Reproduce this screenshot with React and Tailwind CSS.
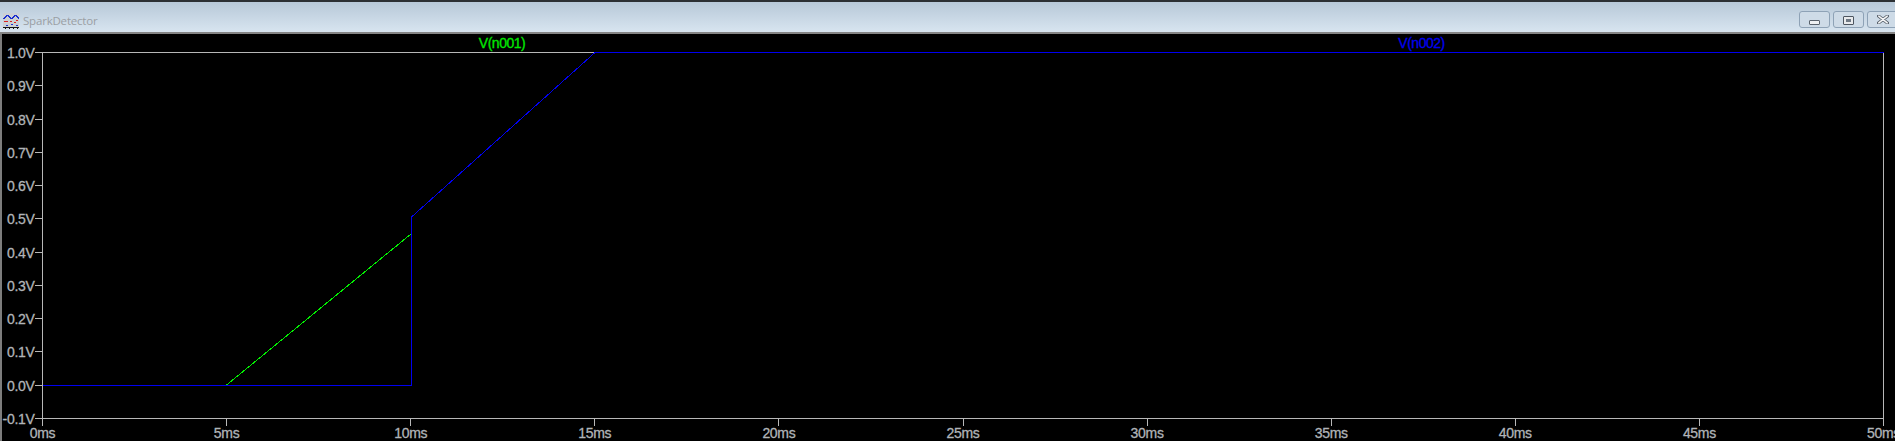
import React from 'react';

const yTicks = ['1.0V', '0.9V', '0.8V', '0.7V', '0.6V', '0.5V', '0.4V', '0.3V', '0.2V', '0.1V', '0.0V', '-0.1V'];
const xTicks = Array.from({ length: 11 }, (_, i) => i * 5);

const LEFT = 42.5;
const RIGHT = 1883.5;
const TOP = 18.5;
const BOTTOM = 384.5;

const xPos = (i) => LEFT + (i * (RIGHT - LEFT)) / 10;
const yPos = (i) => Math.floor(TOP + (i * (BOTTOM - TOP)) / 11) + 0.5;

const AppIcon = () => (
  <svg width="16" height="16" viewBox="0 0 16 16" className="shrink-0" shapeRendering="crispEdges">
    <rect x="0" y="0" width="16" height="14" fill="#ccd0d4" />
    <path d="M0 5 H1 V4 H2 V3 H3 V2 H5 V3 H6 V4 H7 V5 H9 V4 H10 V3 H11 V2 H13 V3 H14 V4 H15 V5 H16" fill="none" stroke="#1a2fd0" />
    <path d="M1 8.5 H5 M7 8.5 H9 M11 9.5 H13 M13 7.5 H15" fill="none" stroke="#d92222" />
    <path d="M3 12.5 H5 M8 11.5 H10 M13 12.5 H15" fill="none" stroke="#1a2fd0" />
    <path d="M0 14.5 H16" fill="none" stroke="#151515" />
    <path d="M2.5 15 V16 M6.5 15 V16 M10.5 15 V16 M14.5 15 V16" fill="none" stroke="#151515" />
  </svg>
);

const CloseGlyph = () => (
  <svg width="12" height="9" viewBox="0 0 12 9">
    <path d="M1.5 1 L10.5 8 M10.5 1 L1.5 8" stroke="#59626c" strokeWidth="3.2" strokeLinecap="round" />
    <path d="M1.8 1.2 L10.2 7.8 M10.2 1.2 L1.8 7.8" stroke="#f4f5f6" strokeWidth="1.6" strokeLinecap="round" />
  </svg>
);

const WinButton = ({ children, className }) => (
  <div className={`h-[17px] flex items-center justify-center border border-[#8ea2b6] rounded-[3px] bg-[#cedbe7] ${className}`}>
    {children}
  </div>
);

export default function App() {
  return (
    <div className="w-[1895px] h-[441px] flex flex-col overflow-hidden bg-black font-['Liberation_Sans',Arial,sans-serif]">
      {/* title bar */}
      <div className="h-[34px] shrink-0 flex items-start justify-between border-t-2 border-t-[#2b2f33] border-b-2 border-b-[#858585] bg-gradient-to-b from-[#b7c8d8] to-[#d8e5f0]">
        <div className="flex items-center gap-[4px] pl-[3px] pt-[11px]">
          <AppIcon />
          <span className="text-[11.5px] leading-[16px] tracking-[-0.2px] text-[#9b9fa4] font-['Open_Sans','Liberation_Sans',sans-serif]">SparkDetector</span>
        </div>
        <div className="flex items-center gap-[3px] -mr-[3px] pt-[9px]">
          <WinButton className="w-[31px]">
            <div className="w-[11px] h-[5px] mt-[5px] bg-[#eef0f2] border border-[#59626c] rounded-[1px]" />
          </WinButton>
          <WinButton className="w-[31px]">
            <div className="w-[11px] h-[9px] mt-[1px] bg-[#e8eaec] border border-[#4d5560] rounded-[1px] flex items-center justify-center">
              <div className="w-[5px] h-[3px] bg-[#6f7985]" />
            </div>
          </WinButton>
          <WinButton className="w-[31px] pr-[0px]">
            <CloseGlyph />
          </WinButton>
        </div>
      </div>

      {/* plot */}
      <div className="flex-1 min-h-0 border-l-2 border-l-[#7d7d7d]">
        <svg width="1893" height="407" viewBox="2 0 1893 407" className="block">
          <rect x={LEFT} y={TOP} width={RIGHT - LEFT} height={BOTTOM - TOP} fill="none" stroke="#b8b8b8" shapeRendering="crispEdges" />
          {yTicks.map((label, i) => (
            <g key={label}>
              <path d={`M35 ${yPos(i)} H${LEFT}`} stroke="#b8b8b8" shapeRendering="crispEdges" />
              <text x="34.5" y={yPos(i) + 5} textAnchor="end" className="fill-[#b0b4b8] stroke-[#b0b4b8] stroke-[0.3px] text-[14px] tracking-[-0.3px]">{label}</text>
            </g>
          ))}
          {xTicks.map((ms, i) => (
            <g key={ms}>
              <path d={`M${Math.floor(xPos(i)) + 0.5} ${BOTTOM} V${BOTTOM + 7}`} stroke="#b8b8b8" shapeRendering="crispEdges" />
              <text x={xPos(i)} y={BOTTOM + 19.5} textAnchor="middle" className="fill-[#b0b4b8] stroke-[#b0b4b8] stroke-[0.3px] text-[14px] tracking-[-0.3px]">{ms}ms</text>
            </g>
          ))}

          <text x="502" y="14" textAnchor="middle" className="fill-[#00e800] stroke-[#00e800] stroke-[0.3px] text-[14px] tracking-[-0.5px]">V(n001)</text>
          <text x="1421.5" y="14" textAnchor="middle" className="fill-[#0000f0] stroke-[#0000f0] stroke-[0.3px] text-[14px] tracking-[-0.5px]">V(n002)</text>

          {/* traces */}
          <path d="M226.5 351 L411 200" fill="none" stroke="#00f000" shapeRendering="crispEdges" />
          <path d="M42.5 351.5 H411.5 V183 L595 18.5 H1883.5" fill="none" stroke="#0000f0" shapeRendering="crispEdges" />
        </svg>
      </div>
    </div>
  );
}
